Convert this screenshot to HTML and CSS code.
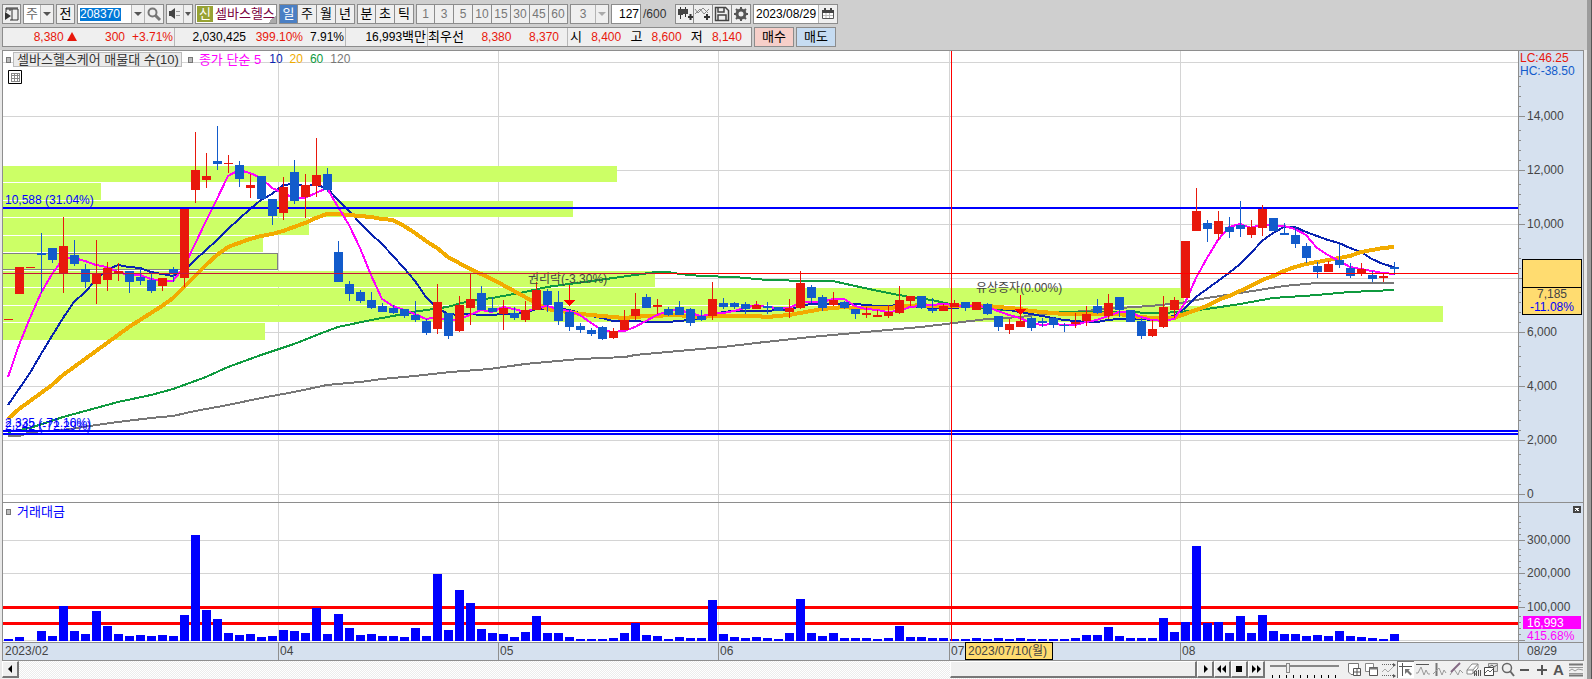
FILE: index.html
```html
<!DOCTYPE html>
<html lang="ko">
<head>
<meta charset="utf-8">
<title>셀바스헬스케어 차트</title>
<link rel="stylesheet" href="styles.css">
</head>
<body>
<div class="window">
<main class="content">
  <header class="head">
    <div class="toolbar">
      <button class="tool" aria-label="패널"><svg width="18" height="18"><path d="M3 4h12v11H7M3 4v3M3 4V3h12M7 4v2M9 4v11" fill="none" stroke="#333"/><path d="M2 7v8l6-4z" fill="#333"/></svg></button>
      <div class="group">
        <span class="cell white gray w16">주</span>
        <button class="cell w14" aria-label="주기 선택"><i class="down"></i></button>
      </div>
      <button class="tool">전</button>
      <div class="group">
        <input class="code" value="208370" aria-label="종목코드">
        <button class="cell w14" aria-label="종목 목록"><i class="down"></i></button>
        <button class="cell w18" aria-label="검색"><svg width="16" height="16"><circle cx="6.500" cy="6.500" r="4" fill="none" stroke="#777" stroke-width="2"/><path d="M9.500 9.500L14 14" stroke="#777" stroke-width="3"/></svg></button>
      </div>
      <div class="group">
        <button class="cell w16" aria-label="소리"><svg width="16" height="16"><path d="M2 5h2l4-3v11l-4-3H2z" fill="#444"/><path d="M10 5v1M10 9v1M12 5v1M12 9v1" stroke="#444"/></svg></button>
        <button class="cell w8" aria-label="소리 설정"><i class="down"></i></button>
      </div>
      <div class="stock"><span class="badge">신</span><span class="name">셀바스헬스</span></div>
      <div class="tabs">
        <button class="active">일</button><button>주</button><button>월</button><button>년</button>
      </div>
      <div class="tabs">
        <button>분</button><button>초</button><button>틱</button>
      </div>
      <div class="tabs muted">
        <button>1</button><button>3</button><button>5</button><button>10</button><button>15</button><button>30</button><button>45</button><button>60</button>
      </div>
      <div class="group muted">
        <span class="cell w24">3</span>
        <button class="cell w14" aria-label="분 선택"><i class="down"></i></button>
      </div>
      <label class="count"><input value="127" aria-label="표시 봉수"><span>/600</span></label>
      <div class="tabs icons">
        <button aria-label="봉 추가"><svg width="18" height="18"><path d="M4.500 2v12M9.500 2v10" stroke="#333"/><path d="M2 4h5v6H2zM7 4h5v5H7z" fill="#444"/><path d="M14.500 9v6M12 12h5" stroke="#333" stroke-width="2"/></svg></button>
        <button aria-label="지표 추가"><svg width="18" height="18"><path d="M1 9l5-5 4 5 5-5M1 4l3 4 5-5 5 5" fill="none" stroke="#888"/><path d="M13 9v6M10 12h6" stroke="#333" stroke-width="2"/></svg></button>
        <button aria-label="저장"><svg width="18" height="18"><path d="M2.500 2.500h10l3 3v10h-13zM5 2v5h6V2M5 16v-6h8v6" fill="none" stroke="#444" stroke-width="1.500"/></svg></button>
        <button aria-label="설정"><svg width="18" height="18"><circle cx="9" cy="9" r="4" fill="none" stroke="#555" stroke-width="3"/><path d="M9 2v3M9 13v3M2 9h3M13 9h3M4 4l2 2M12 12l2 2M14 4l-2 2M6 12l-2 2" stroke="#555" stroke-width="2"/></svg></button>
      </div>
      <div class="group date">
        <input value="2023/08/29" aria-label="날짜">
        <button class="cell w18" aria-label="달력"><svg width="14" height="14"><path d="M1.500 3.500h11v8h-11z" fill="#fff" stroke="#555"/><path d="M1 3h12v3H1zM3 1h2v2H3zM9 1h2v2H9z" fill="#444"/><path d="M5 6v5M8.500 6v5M2 8.500h10" stroke="#bbb"/></svg></button>
      </div>
    </div>
    <div class="quote">
      <div class="prices">
        <div class="sec s1"><span class="up">8,380 <i class="tri"></i></span><span class="up">300</span><span class="up">+3.71%</span></div>
        <div class="sec s2"><span>2,030,425</span><span class="up">399.10%</span><span>7.91%</span></div>
        <div class="sec s3"><span>16,993<b>백만</b></span></div>
        <div class="sec s4"><b>최우선</b><span class="up">8,380</span><span class="up">8,370</span></div>
        <div class="sec s5"><b>시</b><span class="up">8,400</span><b>고</b><span class="up">8,600</span><b>저</b><span class="up">8,140</span></div>
      </div>
      <button class="buy">매수</button>
      <button class="sell">매도</button>
    </div>
  </header>

  <section class="chart">
    <svg class="plot" aria-label="가격 차트"><g id="plot" transform="translate(-3 -51)"></g></svg>
    <svg class="axis" aria-label="가격 축"><g id="axis" transform="translate(-1518 -51)"></g></svg>
    <div class="legend">
      <i class="dot"></i><span class="chip">셀바스헬스케어 매물대 수(10)</span>
      <i class="dot second"></i><span class="m5">종가 단순 5</span><span class="m10">10</span><span class="m20">20</span><span class="m60">60</span><span class="m120">120</span>
    </div>
    <svg class="grid-icon" width="14" height="14"><path d="M.5.5h13v13H.5z" fill="#fff" stroke="#000"/><path d="M3 3.500h9M3 5.500h9M3 8.500h9M3 11.500h9M3.500 3v9M6.500 3v9M9.500 3v9M11.500 3v9" stroke="#888"/></svg>
    <div class="legend volume-legend"><i class="dot"></i><span>거래대금</span></div>
  </section>

  <footer class="bottom">
    <button class="raised" aria-label="왼쪽"><svg width="14" height="14"><path d="M9 3v8L5 7z"/></svg></button>
    <div class="track"><div class="thumb"></div></div>
    <button class="raised" aria-label="오른쪽"><svg width="14" height="14"><path d="M6 3v8l4-4z"/></svg></button>
    <button class="raised" aria-label="뒤로"><svg width="14" height="14"><path d="M6 3v8L2 7zM11 3v8L7 7z"/></svg></button>
    <button class="raised" aria-label="정지"><svg width="14" height="14"><path d="M4 4h6v6H4z"/></svg></button>
    <button class="raised" aria-label="앞으로"><svg width="14" height="14"><path d="M3 3v8l4-4zM8 3v8l4-4z"/></svg></button>
    <label class="slide"><input type="range" min="0" max="100" value="24" aria-label="속도"></label>
    <div class="tools">
      <button aria-label="새 창"><svg width="16" height="16"><path d="M7 12.500H4L1.500 10V1.500h10V7" fill="#fff" stroke="#777"/><path d="M6.500 6.500h7v7h-7zM10 6v8M6 10h8" fill="#fff" stroke="#555"/></svg></button>
      <button aria-label="창 겹치기"><svg width="16" height="16"><path d="M1.500 1.500h8v8h-8z" fill="#fff" stroke="#888"/><path d="M5.500 5.500h8v8h-8z" fill="#fff" stroke="#555"/><path d="M5 6.500h9" stroke="#777" stroke-width="2"/></svg></button>
      <button aria-label="영역"><svg width="16" height="16"><path d="M1 2.500h11M1 13.500h11" stroke="#666" stroke-dasharray="1 1"/><path d="M1 10l3-3 3 3 5-5" fill="none" stroke="#aaa"/><path d="M12 1l3 2-3 2zM12 12l3 2-3 2z" fill="#555"/></svg></button>
      <button class="on" aria-label="십자선"><svg width="16" height="16"><path d="M1 4.500h13M4.500 1v13" stroke="#555"/><path d="M7 7h5l-1.500 1.500L14 12l-1.500 1.500L9 10l-2 2z" fill="#777"/></svg></button>
      <button aria-label="추세선"><svg width="16" height="16"><path d="M1 2.500h13" stroke="#555"/><path d="M1 11h2l3-6 3 8 2-5 2 4h2" fill="none" stroke="#999"/></svg></button>
      <button aria-label="수직선"><svg width="16" height="16"><path d="M4.500 1v13" stroke="#777" stroke-width="2"/><path d="M1 12l6-6 3 7 2-5 2 3" fill="none" stroke="#999"/></svg></button>
      <button aria-label="그리기"><svg width="16" height="16"><path d="M1 13l4-6 4 6 2-5 3 3" fill="none" stroke="#999"/><path d="M2 10L11 1" stroke="#846a84" stroke-width="2"/></svg></button>
      <button aria-label="모두 지우기"><svg width="16" height="16"><path d="M1 8l5-6h6l-5 6zM1 8v4h5l6-6V2M7 8v4" fill="#fff" stroke="#888"/><path d="M8.500 14V9h2v5M8 12h3M12.500 8v6M14.500 8v6" fill="none" stroke="#555"/></svg></button>
      <button aria-label="차트 복사"><svg width="16" height="16"><path d="M5.500 1.500h9v8h-9z" fill="#ddd" stroke="#888"/><path d="M1.500 5.500h9v8h-9z" fill="#fff" stroke="#444"/><path d="M2 11l3-3 2 2 3-3M6 5l3-2 2 2 3-2" fill="none" stroke="#666"/></svg></button>
      <button aria-label="돋보기"><svg width="16" height="16"><circle cx="7" cy="6" r="4.500" fill="none" stroke="#666" stroke-width="1.500"/><path d="M10 9l4 5" stroke="#666" stroke-width="2"/></svg></button>
      <button aria-label="축소"><svg width="16" height="16"><path d="M3 8h9" stroke="#555" stroke-width="2"/></svg></button>
      <button aria-label="확대"><svg width="16" height="16"><path d="M3 8h10M8 3v10" stroke="#555" stroke-width="2"/></svg></button>
      <button class="letter">A</button>
      <button aria-label="지표 목록"><svg width="16" height="16"><path d="M1 2.500h14M1 13.500h14" stroke="#777" stroke-width="2"/><path d="M1 9l3-2 3 2 3-2 5 1M1 5.500h14M1 11.500h14" fill="none" stroke="#999"/></svg></button>
    </div>
  </footer>
</main>
<div class="edge"></div>
</div>
<script src="chart.js"></script>
</body>
</html>
```

FILE: styles.css
```css
* { box-sizing: border-box; }
body {
  margin: 0;
  background: #e8e8e8;
  font-family: "Liberation Sans", "Noto Sans CJK KR", sans-serif;
  font-size: 13px;
  color: #000;
}
button, input { font: inherit; color: inherit; margin: 0; padding: 0; border-radius: 0; }
button { display: flex; align-items: center; justify-content: center; background: #efefef; border: 0; }
input { border: 0; outline: 0; background: #fff; min-width: 0; }
b { font-weight: normal; font-size: 13px; }
svg { display: block; flex: none; }

.window { display: flex; min-height: 100vh; }
.content { flex: 1; min-width: 0; display: flex; flex-direction: column; }
.edge { width: 5px; background: #9c9c9c; border-right: 1px solid #555; }

/* header */
.head { background: #cfcfcf; padding: 4px 0 3px 2px; display: flex; flex-direction: column; gap: 3px; }
.toolbar { display: flex; gap: 2px; height: 20px; line-height: 16px; }
.tool, .group, .stock, .tabs { border: 1px solid #8c8c8c; height: 20px; display: flex; flex: none; }
.tool { width: 19px; }
.cell { display: flex; align-items: center; justify-content: center; background: #efefef; }
.cell + .cell, input + .cell { border-left: 1px solid #b4b4b4; }
.white { background: #fff; }
.gray { color: #666; }
.w8 { width: 9px; }
.w14 { width: 13px; }
.w16 { width: 16px; }
.w18 { width: 19px; }
.w24 { width: 24px; }
.down { border: 4px solid transparent; border-top: 4px solid #555; border-bottom: 0; }
.w8 .down { border-width: 4px 3px 0; }
.code {
  width: 53px; padding-left: 2px; font-size: 12px; color: #fff;
  background: linear-gradient(#0078d7, #0078d7) 2px 3px / 41px 13px no-repeat #fff;
}
.stock { width: 82px; background: #fff; align-items: center; padding-left: 1px; gap: 2px; overflow: hidden; }
.stock { background: linear-gradient(135deg, transparent 50%, #aaa 50%) 100% 100% / 8px 8px no-repeat #fff; }
.badge { background: #97a233; color: #fff; width: 16px; height: 16px; text-align: center; flex: none; }
.name { color: #7a0040; white-space: nowrap; }
.tabs button { width: 19px; border-left: 1px solid #8c8c8c; }
.tabs button:first-child { border-left: 0; width: 17px; }
.tabs .active { background: #4a7fc4; color: #fff; }
.muted { color: #777; font-size: 12px; }
.muted .down { border-top-color: #aaa; }
.count { display: flex; width: 62px; font-size: 12px; }
.count input { width: 30px; height: 20px; border: 1px solid #8c8c8c; text-align: right; padding-right: 1px; }
.count span { padding: 2px 0 0 2px; color: #333; }
.date { font-size: 12px; }
.date input { width: 64px; padding-left: 2px; }

.quote { display: flex; gap: 2px; height: 20px; line-height: 18px; }
.prices { display: flex; width: 750px; border: 1px solid #8c8c8c; background: #efefef; font-size: 12px; }
.sec { display: flex; justify-content: flex-end; white-space: nowrap; border-right: 1px solid #b8b8b8; padding-right: 1px; }
.sec span { text-align: right; }
.sec:last-child { border-right: 0; }
.up { color: #e8180c; }
.tri { display: inline-block; border: 5px solid transparent; border-top: 0; border-bottom: 9px solid #e8180c; }
.s1 { width: 172px; } .s1 span:nth-child(n+2) { width: 48px; }
.s2 { width: 171px; } .s2 span:nth-child(n+2) { width: 57px; } .s2 span:last-child { width: 41px; }
.s3 { width: 82px; }
.s4 { width: 140px; padding-right: 8px; } .s4 span { width: 48px; }
.s5 { flex: 1; justify-content: space-between; padding: 0 9px 0 2px; }
.buy, .sell { width: 40px; height: 20px; border: 1px solid #8c8c8c; }
.buy { background: #f6cfc9; }
.sell { background: #c6dcf2; }

/* chart */
.chart {
  flex: 1; position: relative; display: grid; grid-template-columns: minmax(0, 1fr) 66px;
  margin: 0 3px 0 2px; border-left: 1px solid #8e8e8e; border-top: 1px solid #8e8e8e; background: #fff;
}
.plot, .axis { width: 100%; height: 610px; font-size: 12px; overflow: hidden; }
.legend { position: absolute; left: 3px; top: 1px; display: flex; align-items: center; line-height: 13px; font-size: 13px; white-space: nowrap; }
.dot { width: 5px; height: 6px; border: 1px solid #777; background: #bbb; margin-right: 2px; flex: none; }
.chip { border: 1px solid #bbb; background: #ebebeb; padding: 0 2px 0 3px; color: #333; }
.second { margin: 0 6px; }
.m5 { color: #f0f; margin-right: 8px; }
.m10, .m20, .m60, .m120 { font-size: 12px; }
.m10 { color: #0a24b0; margin-right: 7px; }
.m20 { color: #f0ac00; margin-right: 7px; }
.m60 { color: #0f9a3f; margin-right: 7px; }
.m120 { color: #777; }
.grid-icon { position: absolute; left: 5px; top: 19px; }
.volume-legend { top: 454px; gap: 4px; color: #00f; }

/* bottom bar */
.bottom { display: flex; height: 18px; margin: 0 3px 0 2px; background: #f0f0f0; }
.raised { width: 17px; height: 17px; border: 1px solid #fff; border-right: 2px solid #777; border-bottom: 2px solid #777; }
.track {
  flex: 1; display: flex; justify-content: flex-end;
  background: repeating-conic-gradient(#ececec 0 25%, #fff 0 50%) 0 0 / 2px 2px;
}
.thumb { width: 21%; height: 17px; background: #efefef; border: 1px solid #fff; border-right: 2px solid #777; border-bottom: 2px solid #777; }
.slide {
  width: 69px; margin: 2px 7px 0 5px;
  background: repeating-linear-gradient(90deg, #000 0 1px, transparent 1px 7px) 2px 12px / 67px 3px no-repeat;
}
.slide input { appearance: none; display: block; width: 100%; height: 10px; background: linear-gradient(#888, #888) 0 2px / 100% 2px no-repeat; }
.slide input::-webkit-slider-thumb { appearance: none; width: 4px; height: 10px; background: #eee; border: 1px solid #888; }
.tools { display: flex; }
.tools button { width: 17px; height: 17px; background: none; }
.tools .on { background: #fff; border-left: 1px solid #777; border-top: 1px solid #777; }
.tools .letter { font: bold 15px "Liberation Sans", sans-serif; color: #555; }
```

FILE: chart.js
```js
const STEP = 11, FIRST = 8;
const RED = '#e8180c', BLUE = '#125bcb';
const cx = i => FIRST + STEP * i;

// [colour, high, body top, body bottom, low] in chart pixels
const candles = `r 319 319 320 319|r 267 267 294 294|r 267 267 268 267|b 233 253 255 293|b 248 248 260 263|r 217 246 273 293|b 240 255 264 266|b 264 269 282 288|r 240 273 284 304|r 262 268 280 291|r 263 271 273 281|b 271 271 282 293|b 268 277 281 285|b 272 280 291 293|r 278 278 286 291|b 267 269 274 282|r 209 209 278 287|r 132 170 190 203|r 153 176 180 188|b 126 161 164 170|r 155 163 164 173|b 161 165 179 187|r 174 185 188 198|b 176 176 199 199|b 199 199 216 225|r 177 187 213 220|b 160 172 201 204|r 174 185 197 218|r 138 175 186 197|b 168 174 190 192|b 241 252 282 282|b 281 284 294 301|b 290 292 301 303|b 292 300 308 309|b 303 306 312 312|b 305 308 313 314|b 309 309 316 318|b 301 315 320 322|b 319 321 333 335|r 284 302 329 334|b 313 313 336 339|r 296 305 331 332|r 273 299 308 325|b 286 293 310 310|b 297 308 312 312|r 300 308 314 330|b 307 313 318 320|r 301 310 320 322|r 282 290 310 310|b 289 291 305 312|b 291 302 321 325|b 309 312 327 331|b 323 326 330 333|b 328 330 334 336|b 326 327 339 340|r 328 331 338 339|r 310 320 330 330|r 293 309 316 320|b 294 297 308 308|r 299 305 307 314|b 307 309 315 316|b 301 307 315 315|b 308 309 323 326|b 310 316 320 321|r 282 299 316 320|b 298 303 307 309|b 302 303 307 309|b 302 304 309 314|r 301 305 309 309|b 302 306 308 314|b 307 307 311 311|r 299 308 312 318|r 271 283 308 309|b 285 287 298 303|b 295 297 308 311|r 292 300 305 306|b 301 302 308 309|b 309 309 314 319|r 307 313 315 318|r 310 315 317 317|r 305 312 316 318|r 286 300 313 314|r 296 296 301 306|b 296 296 308 309|b 298 309 311 313|r 304 306 311 311|r 300 303 307 307|b 302 302 308 311|r 302 302 310 310|b 303 304 314 315|b 316 316 327 331|r 319 324 330 334|r 315 321 327 327|b 317 318 328 331|b 318 321 323 327|b 317 318 325 328|b 323 325 326 332|r 313 322 324 328|r 306 314 321 326|b 299 306 313 314|r 294 303 316 319|b 297 297 310 317|b 310 310 322 322|b 318 321 336 339|r 320 329 336 337|r 296 307 327 328|r 297 300 310 318|r 241 241 298 298|r 188 211 231 231|b 220 223 229 242|r 211 221 234 240|b 217 227 232 238|b 201 225 229 237|r 220 227 235 238|r 205 209 228 236|b 218 218 231 231|b 223 233 235 235|b 227 235 244 248|b 243 246 258 263|b 262 266 272 278|r 261 264 272 272|b 244 260 265 268|b 263 268 276 278|r 263 269 274 276|b 271 275 279 282|r 274 276 278 282|b 262 267 269 275`
  .split('|').map(s => s.split(' ').map((v, k) => k ? +v : v));

const volumes = [2,4,0,10,5,35,10,7,30,15,7,5,6,5,6,5,26,106,31,22,8,6,7,4,5,11,10,8,33,7,27,13,6,7,5,5,4,13,5,67,11,51,38,12,8,7,4,9,25,8,8,4,2,2,2,3,8,18,6,5,2,4,3,3,41,7,4,3,4,3,2,8,42,8,5,8,3,3,3,2,3,15,4,4,3,3,2,2,3,2,3,2,3,2,2,2,2,3,6,6,14,5,3,3,3,23,9,19,95,18,19,8,25,8,26,10,7,7,5,6,5,10,5,4,3,2,7];

const close = candles.map(c => c[0] === 'r' ? c[2] : c[3]);
const average = (n, seed) => close.map((_, i) => {
  const y = i < n - 1 ? seed[i] : close.slice(i - n + 1, i + 1).reduce((a, b) => a + b) / n;
  return `${cx(i)},${Math.round(y)}`;
}).join(' ');

const ma5 = average(5, [377, 345, 318, 293]);
const ma10 = average(10, [405, 389, 373, 354, 336, 318, 302, 292, 280]);
const ma20 = average(20, [419, 409, 401, 393, 385, 375, 367, 359, 351, 343, 335, 327, 320, 313, 306, 298, 287, 276, 265]);
const ma60 = '8,432 30,428 63,417 85,411 118,402 151,395 173,389 206,377 228,367 261,355 294,344 327,331 338,327 371,320 393,316 413,312 447,307 470,301 492,298 525,292 547,287 569,284 592,281 613,278 635,275 656,272 668,272 680,274 701,276 734,277 767,280 811,281 833,281 855,286 888,293 910,297 932,300 954,305 987,309 1020,311 1053,312 1119,312 1160,313 1180,312 1207,309 1240,304 1273,298 1317,295 1350,292 1394,290';
const ma120 = '8,436 20,436 30,432 63,430 96,425 118,422 151,418 173,416 195,411 228,405 261,398 294,392 327,385 360,382 382,379 415,376 450,372 490,369 525,364 580,359 625,357 635,355 679,351 723,347 756,343 811,337 844,334 877,331 921,327 954,323 987,319 1020,317 1053,313 1086,311 1119,308 1150,306 1180,303 1207,298 1240,293 1284,286 1317,283 1394,283';

const rect = (x, y, w, h, fill) => `<rect x="${x}" y="${y}" width="${w}" height="${h}" fill="${fill}"/>`;
const line = (pts, color, w) => `<polyline points="${pts}" fill="none" stroke="${color}" stroke-width="${w}"/>`;
const text = (x, y, s, fill = '#444', anchor = 'start') => `<text x="${x}" y="${y}" fill="${fill}" text-anchor="${anchor}">${s}</text>`;
const hline = (y, h, fill) => rect(3, y, '100%', h, fill);

let p = '';
[62, 116, 170, 224, 278, 332, 386, 440, 494, 540, 573, 640].forEach(y => p += hline(y, 1, '#d4d4d4'));
const months = [[278, '04'], [498, '05'], [718, '06'], [949, '07'], [1180, '08']];
months.forEach(([x]) => p += rect(x, 51, 1, 590, '#d4d4d4'));
[[166, 16, 617], [183, 17, 101], [201, 16, 573], [218, 17, 309], [236, 16, 263], [254, 16, 278], [271, 16, 655], [288, 17, 1184], [306, 16, 1443], [323, 17, 265]]
  .forEach(([y, h, x]) => p += rect(3, y, x - 3, h, '#ccff66'));
p += '<path d="M3 253.500H277.500V269.500H3" fill="none" stroke="#808080"/>';
p += line(ma120, '#777', 2) + line(ma60, '#0f9a3f', 2) + line(ma10, '#0a24b0', 2) + line(ma20, '#f2ab00', 4) + line(ma5, '#f0f', 2);
p += hline(207, 2, '#00f') + hline(430, 2, '#00f') + hline(433, 2, '#00f');
candles.forEach(([c, hi, top, bot, lo], i) => {
  const f = c === 'r' ? RED : BLUE;
  p += rect(cx(i), hi, 1, Math.max(lo - hi, 1), f) + rect(cx(i) - 4, top, 9, bot - top, f);
});
p += hline(606, 3, '#f00') + hline(622, 3, '#f00');
volumes.forEach((v, i) => { if (v) p += rect(cx(i) - 4, 641 - v, 9, v, '#00f'); });
p += hline(502, 1, '#8e8e8e');
p += text(5, 204, '10,588 (31.04%)', '#00f') + text(5, 427, '2,335 (-71.10%)', '#00f') + text(5, 430, '2,242 (-72.29%)', '#00f');
p += text(528, 283, '권리락(-3.30%)') + text(976, 292, '유상증자(0.00%)');
p += rect(569, 285, 1, 15, '#f00') + '<path d="M563 300h12l-6 6z" fill="#f00"/>';
p += rect(1020, 295, 1, 14, '#f00') + '<path d="M1014 309h12l-6 6z" fill="#f00"/>';
p += rect(3, 273, 652, 1, '#c8143c') + rect(655, 273, '100%', 1, '#f00');
p += rect(951, 51, 1, 590, '#f00');
// time axis
p += hline(641, 1, '#fff') + hline(642, 19, '#d6e1ef') + hline(642, 1, '#8e8e8e') + hline(660, 1, '#8e8e8e');
p += text(5, 655, '2023/02');
months.forEach(([x, m]) => p += rect(x, 642, 1, 19, '#8e8e8e') + text(x + 2, 655, m));
p += '<rect x="965.500" y="642.500" width="87" height="17" fill="#ffdc70" stroke="#000"/>' + text(968, 655, '2023/07/10(월)');
document.getElementById('plot').innerHTML = p;

let a = rect(1518, 51, 66, 610, '#d6e1ef') + rect(1518, 51, 1, 610, '#8e8e8e') + rect(1583, 51, 1, 610, '#8e8e8e');
const ticks = (majors, gap) => majors.forEach(y => {
  a += rect(1519, y, 6, 1, '#8e8e8e');
  for (let k = 1; k < 5; k++) a += rect(1519, y - gap * k, 2, 1, '#8e8e8e');
});
ticks([116, 170, 224, 278, 332, 386, 440, 494], 10);
ticks([540, 573, 607, 640], 6);
['14,000', '12,000', '10,000', '', '6,000', '4,000', '2,000', '0'].forEach((s, i) => a += text(1527, 120 + 54 * i, s));
['300,000', '200,000', '100,000'].forEach((s, i) => a += text(1527, [544, 577, 611][i], s));
a += text(1520, 62, 'LC:46.25', RED) + text(1520, 75, 'HC:-38.50', BLUE);
a += '<path d="M1522.500 259.500h59v55h-59zM1522.500 287.500h59" fill="#ffdc70" stroke="#000"/>';
a += text(1552, 298, '7,185', '#444', 'middle') + text(1552, 311, '-11.08%', '#00f', 'middle');
a += rect(1523, 616, 58, 13, '#f0f') + text(1527, 627, '16,993', '#fff') + text(1527, 640, '415.68%', '#f0f');
a += rect(1518, 502, 66, 1, '#8e8e8e') + rect(1518, 642, 66, 1, '#8e8e8e') + rect(1518, 660, 66, 1, '#8e8e8e');
a += rect(1573, 506, 8, 7, '#444') + '<path d="M1575 508l4 3M1579 508l-4 3" stroke="#fff"/>';
a += text(1527, 655, '08/29');
document.getElementById('axis').innerHTML = a;
document.querySelectorAll('.plot, .axis').forEach(s => s.setAttribute('shape-rendering', 'crispEdges'));
```
